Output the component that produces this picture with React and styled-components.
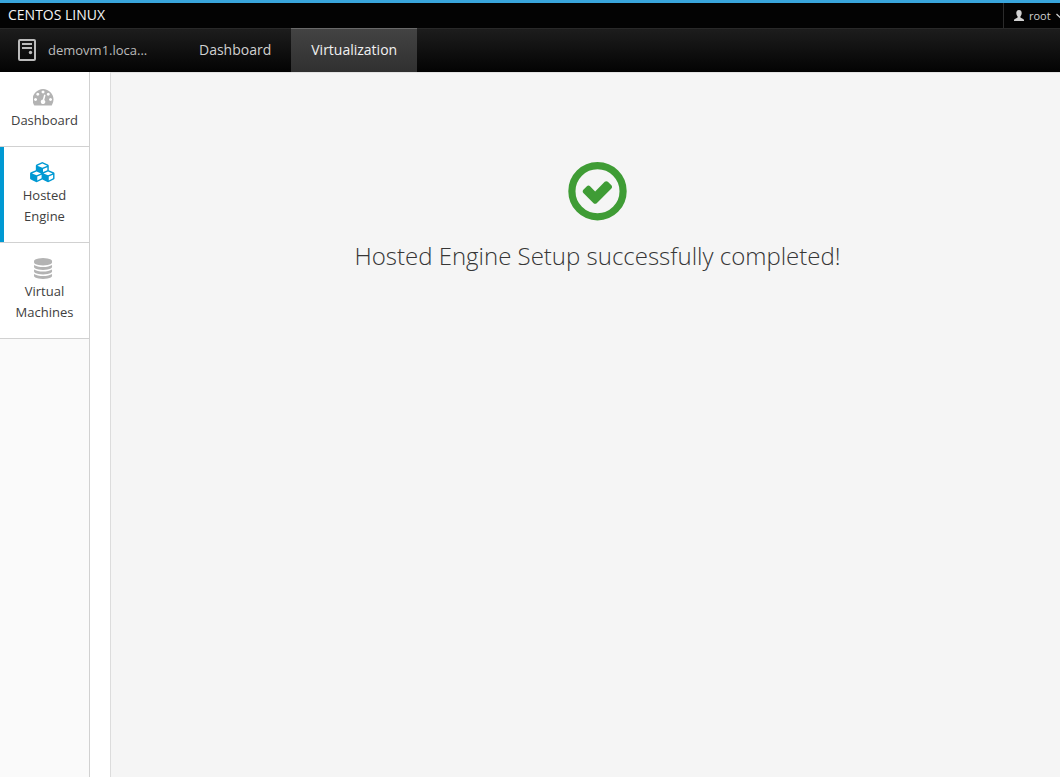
import React from "react";
import styled, { createGlobalStyle } from "styled-components";

const GlobalStyle = createGlobalStyle`
  *, *::before, *::after { box-sizing: border-box; }
  html, body { margin: 0; padding: 0; }
  body {
    overflow: hidden;
    background: #ffffff;
    color: #363636;
    font-family: "Open Sans", "Noto Sans", sans-serif;
    font-size: 13px;
    line-height: 21px;
  }
`;

const Page = styled.div`
  display: flex;
  flex-direction: column;
  min-height: 100vh;
`;

const Masthead = styled.header`
  border-top: 3px solid #39a5dc;
  background: #030303;
`;

const BrandBar = styled.div`
  display: flex;
  align-items: stretch;
  justify-content: space-between;
  height: 25px;
`;

const Brand = styled.span`
  padding-left: 8px;
  font-size: 14px;
  line-height: 24px;
  color: #f5f5f5;
`;

const UserButton = styled.button`
  display: flex;
  align-items: center;
  flex: none;
  gap: 5px;
  width: 57px;
  padding: 0 0 0 10px;
  overflow: hidden;
  border: 0;
  border-left: 1px solid #2b2b2b;
  background: transparent;
  color: #d1d1d1;
  font-family: inherit;
  font-size: 11px;
  line-height: 24px;

  svg { flex: none; }
`;

const NavBar = styled.nav`
  display: flex;
  height: 44px;
  border-top: 1px solid #292929;
  background: linear-gradient(#1d1d1d, #030303);
`;

const HostButton = styled.button`
  display: flex;
  align-items: center;
  gap: 12px;
  width: 179px;
  padding: 0 0 1px 18px;
  border: 0;
  background: transparent;
  color: #bbbbbb;
  font-family: inherit;
  font-size: 13px;
  line-height: 21px;
`;

const NavLink = styled.a`
  display: flex;
  align-items: center;
  margin-top: -1px;
  padding: 0 20px 1px;
  border-top: 1px solid ${(p) => (p.$active ? "#696969" : "#292929")};
  background: ${(p) => (p.$active ? "linear-gradient(#434343, #303030)" : "transparent")};
  color: ${(p) => (p.$active ? "#f1f1f1" : "#d1d1d1")};
  font-size: 14px;
  line-height: 20px;
  text-decoration: none;
`;

const Body = styled.div`
  display: flex;
  flex: 1;
`;

const Sidebar = styled.nav`
  flex: none;
  width: 90px;
  border-right: 1px solid #d1d1d1;
  background: #fafafa;
`;

const SideLink = styled.a`
  display: flex;
  flex-direction: column;
  align-items: center;
  gap: 2px;
  padding: 15px 8px;
  border-bottom: 1px solid #d1d1d1;
  background: #ffffff;
  box-shadow: ${(p) => (p.$active ? "inset 4px 0 0 #0099d3" : "none")};
  color: #404040;
  text-align: center;
  text-decoration: none;

  svg {
    height: 21px;
    margin-right: 3px;
    fill: ${(p) => (p.$active ? "#0099d3" : "#b3b3b3")};
  }
`;

const Main = styled.main`
  display: flex;
  flex: 1;
  flex-direction: column;
  align-items: center;
  margin-left: 20px;
  padding: 89px 0 0 24px;
  border-top: 1px solid #e3e3e3;
  border-left: 1px solid #dcdcdc;
  background: #f5f5f5;
`;

const Message = styled.h1`
  margin: 18px 0 0;
  color: #363636;
  font-size: 24px;
  font-weight: 300;
  line-height: 32px;
`;

const ServerIcon = () => (
  <svg width="18" height="22" viewBox="0 0 18 22" aria-hidden="true">
    <rect x="1" y="1" width="16" height="20" rx="1" fill="none" stroke="#bbbbbb" strokeWidth="2" />
    <path d="M4 4h10v2H4zM4 8h10v2H4z" fill="#bbbbbb" />
    <circle cx="12.5" cy="13.5" r="1.7" fill="#bbbbbb" />
  </svg>
);

const UserIcon = () => (
  <svg width="10" height="11" viewBox="0 0 10 11" fill="#d1d1d1" aria-hidden="true">
    <path d="M5 0C3.3 0 2.3 1.2 2.3 3c0 1.5.6 2.8 1.3 3.4v1.2L.9 8.9C.3 9.2 0 9.7 0 10.3V11h10v-.7c0-.6-.3-1.1-.9-1.4L6.4 7.6V6.4C7.1 5.8 7.7 4.5 7.7 3 7.7 1.2 6.7 0 5 0z" />
  </svg>
);

const ChevronIcon = () => (
  <svg width="8" height="6" viewBox="0 0 8 6" fill="none" stroke="#d1d1d1" strokeWidth="1.3" aria-hidden="true">
    <path d="M.5 1L4 4.3 7.5 1" />
  </svg>
);

const DashboardIcon = () => (
  <svg viewBox="40 80 1792 1792" aria-hidden="true">
    <path d="M384 1152q0-53-37.5-90.5t-90.5-37.5-90.5 37.5-37.5 90.5 37.5 90.5 90.5 37.5 90.5-37.5 37.5-90.5zm192-448q0-53-37.5-90.5t-90.5-37.5-90.5 37.5-37.5 90.5 37.5 90.5 90.5 37.5 90.5-37.5 37.5-90.5zm428 481l101-382q6-26-7.5-48.5t-38.5-29.5-48 6.5-30 39.5l-101 382q-60 5-107 43.5t-63 98.5q-20 77 20 146t117 89 146-20 89-117q16-60-6-117t-72-91zm660-33q0-53-37.5-90.5t-90.5-37.5-90.5 37.5-37.5 90.5 37.5 90.5 90.5 37.5 90.5-37.5 37.5-90.5zm-640-640q0-53-37.5-90.5t-90.5-37.5-90.5 37.5-37.5 90.5 37.5 90.5 90.5 37.5 90.5-37.5 37.5-90.5zm448 192q0-53-37.5-90.5t-90.5-37.5-90.5 37.5-37.5 90.5 37.5 90.5 90.5 37.5 90.5-37.5 37.5-90.5zm320 448q0 261-141 483-19 29-54 29h-1402q-35 0-54-29-141-221-141-483 0-182 71-348t191-286 286-191 348-71 348 71 286 191 191 286 71 348z" />
  </svg>
);

const CubesIcon = () => (
  <svg viewBox="-8 -10 2400 1870" aria-hidden="true">
    <path d="M640 1632l384-192v-314l-384 164v342zm-64-454l404-173-404-173-404 173zm1088 454l384-192v-314l-384 164v342zm-64-454l404-173-404-173-404 173zm-448-293l384-165v-266l-384 164v267zm-64-379l441-189-441-189-441 189zm1088 518v416q0 36-19 67t-52 47l-448 224q-25 14-57 14t-57-14l-448-224q-4-2-7-4-2 2-7 4l-448 224q-25 14-57 14t-57-14l-448-224q-33-16-52-47t-19-67v-416q0-38 21.5-70t56.5-48l434-186v-400q0-38 21.5-70t56.5-48l448-192q23-10 50-10t50 10l448 192q35 16 56.5 48t21.5 70v400l434 186q36 16 57 48t21 70z" />
  </svg>
);

const DatabaseIcon = () => (
  <svg viewBox="40 0 1792 1792" aria-hidden="true">
    <path d="M896 768q237 0 443-43t325-127v170q0 69-103 128t-280 93.5-385 34.5-385-34.5-280-93.5-103-128v-170q119 84 325 127t443 43zm0 768q237 0 443-43t325-127v170q0 69-103 128t-280 93.5-385 34.5-385-34.5-280-93.5-103-128v-170q119 84 325 127t443 43zm0-384q237 0 443-43t325-127v170q0 69-103 128t-280 93.5-385 34.5-385-34.5-280-93.5-103-128v-170q119 84 325 127t443 43zm0-1152q208 0 385 34.5t280 93.5 103 128v128q0 69-103 128t-280 93.5-385 34.5-385-34.5-280-93.5-103-128v-128q0-69 103-128t280-93.5 385-34.5z" />
  </svg>
);

const SuccessIcon = () => (
  <svg width="60" height="60" viewBox="0 0 60 60" aria-hidden="true">
    <circle cx="29.5" cy="29.2" r="25.6" fill="none" stroke="#3f9c35" strokeWidth="7.2" />
    <path
      transform="translate(-1.8 -1.8) scale(.0348)"
      d="M1299 813l-422 422q-19 19-45 19t-45-19l-294-294q-19-19-19-45t19-45l102-102q19-19 45-19t45 19l147 147 275-275q19-19 45-19t45 19l102 102q19 19 19 45t-19 45z"
      fill="#3f9c35"
    />
  </svg>
);

const SECTIONS = [
  { label: "Dashboard", Icon: DashboardIcon },
  { label: "Hosted Engine", Icon: CubesIcon, active: true },
  { label: "Virtual Machines", Icon: DatabaseIcon },
];

export default function App() {
  return (
    <Page>
      <GlobalStyle />
      <Masthead>
        <BrandBar>
          <Brand>CENTOS LINUX</Brand>
          <UserButton type="button">
            <UserIcon />
            root
            <ChevronIcon />
          </UserButton>
        </BrandBar>
        <NavBar aria-label="Primary">
          <HostButton type="button">
            <ServerIcon />
            demovm1.loca...
          </HostButton>
          <NavLink href="#dashboard">Dashboard</NavLink>
          <NavLink href="#virtualization" $active aria-current="page">
            Virtualization
          </NavLink>
        </NavBar>
      </Masthead>
      <Body>
        <Sidebar aria-label="Virtualization">
          {SECTIONS.map(({ label, Icon, active }) => (
            <SideLink key={label} href="#section" $active={active}>
              <Icon />
              {label}
            </SideLink>
          ))}
        </Sidebar>
        <Main>
          <SuccessIcon />
          <Message>Hosted Engine Setup successfully completed!</Message>
        </Main>
      </Body>
    </Page>
  );
}
